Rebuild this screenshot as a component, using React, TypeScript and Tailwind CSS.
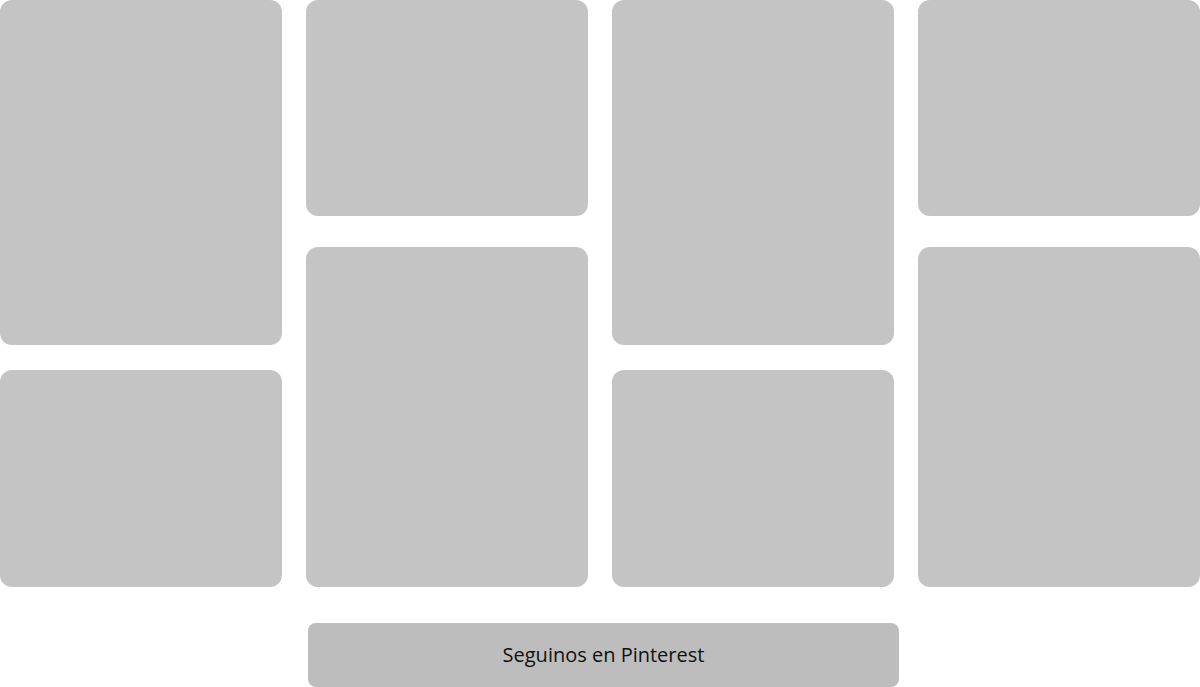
export default function App() {
  return (
    <div className="w-[1200px] bg-white" style={{ fontFamily: '"Open Sans", sans-serif' }}>
      <div className="grid grid-cols-4 gap-6">
        <div className="flex flex-col gap-[25px]">
          <div className="h-[345px] rounded-xl bg-[#c4c4c4]" />
          <div className="h-[217px] rounded-xl bg-[#c4c4c4]" />
        </div>
        <div className="flex flex-col gap-[31px]">
          <div className="h-[216px] rounded-xl bg-[#c4c4c4]" />
          <div className="h-[340px] rounded-xl bg-[#c4c4c4]" />
        </div>
        <div className="flex flex-col gap-[25px]">
          <div className="h-[345px] rounded-xl bg-[#c4c4c4]" />
          <div className="h-[217px] rounded-xl bg-[#c4c4c4]" />
        </div>
        <div className="flex flex-col gap-[31px]">
          <div className="h-[216px] rounded-xl bg-[#c4c4c4]" />
          <div className="h-[340px] rounded-xl bg-[#c4c4c4]" />
        </div>
      </div>
      <div className="mt-9 ml-[308px] w-[591px]">
        <button className="flex h-16 w-full items-center justify-center rounded-lg bg-[#bdbdbd] text-[20px] text-[#111]">
          Seguinos en Pinterest
        </button>
      </div>
    </div>
  );
}
